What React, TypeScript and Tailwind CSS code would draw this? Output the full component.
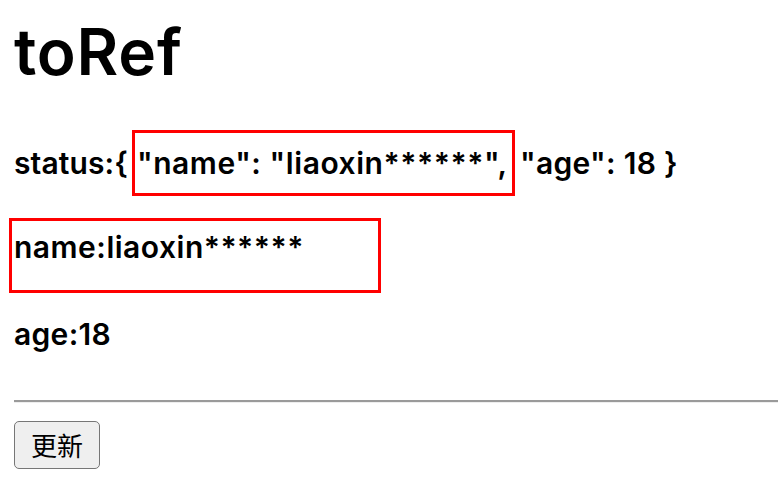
export default function App() {
  const f = { fontFamily: 'Inter, "Noto Sans CJK SC", sans-serif' };
  return (
    <div className="w-[778px] h-[484px] bg-white text-black overflow-hidden pl-[14px]" style={f}>
      <h1 className="text-[64px] leading-[64px] font-semibold pt-[20px] h-[130px] tracking-[0.8px]">toRef</h1>
      <div className="flex items-center h-[66px] text-[30px] leading-[30px] font-semibold whitespace-nowrap">
        <span className="tracking-[0.1px]">status:{'{'}</span>
        <span className="ml-[4px] h-[66px] w-[383px] shrink-0 border-[3px] border-[#ff0000] flex items-center pl-[2px] tracking-[0.55px]">
          "name": "liaoxin******",
        </span>
        <span className="ml-[5px] tracking-[0.3px]">"age": 18 {'}'}</span>
      </div>
      <div className="mt-[22px] ml-[-5px] w-[372px] h-[75px] border-[3px] border-[#ff0000] pl-[2px] pt-[11px] text-[30px] leading-[30px] font-semibold whitespace-nowrap tracking-[0.5px]">
        name:liaoxin******
      </div>
      <div className="mt-[26px] text-[30px] leading-[30px] font-semibold tracking-[0.3px]">age:18</div>
      <div className="mt-[51px] border-t-2 border-[#9a9a9a] border-b border-b-[#eeeeee]" />
      <button className="mt-[18px] w-[86px] h-[48px] border-[1.5px] border-[#767676] rounded-[5px] bg-[#efefef] text-[26px] leading-none" style={{ fontFamily: '"Noto Sans CJK SC", sans-serif' }}>更新</button>
    </div>
  );
}
